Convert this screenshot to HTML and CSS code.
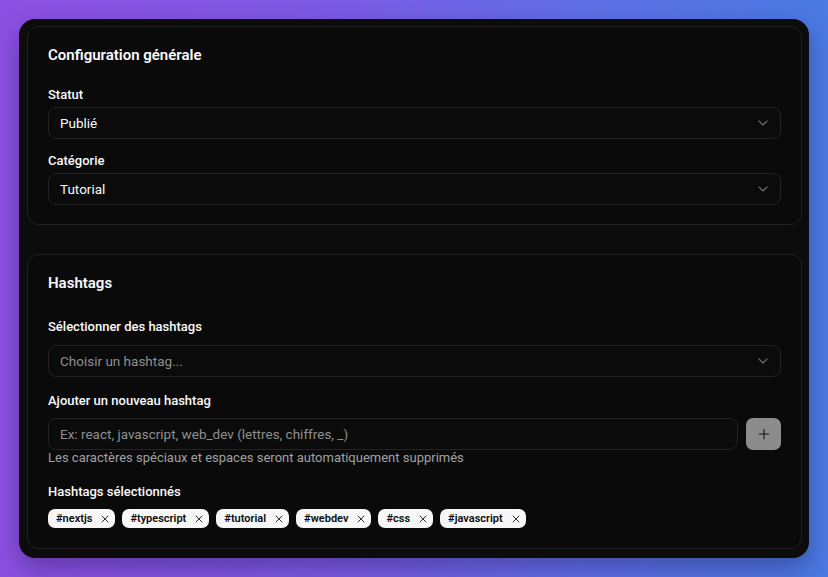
FILE: index.html
```html
<!DOCTYPE html>
<html lang="fr">
<head>
<meta charset="utf-8">
<title>Configuration</title>
<link rel="stylesheet" href="styles.css">
</head>
<body>
<div class="panel">
  <section class="card card-general">
    <h2 class="card-title">Configuration générale</h2>
    <div class="field">
      <label class="label">Statut</label>
      <div class="select">
        <span class="select-value">Publié</span>
        <svg class="chevron" viewBox="0 0 24 24" width="16" height="16"><path d="m6 9 6 6 6-6"/></svg>
      </div>
    </div>
    <div class="field field-second">
      <label class="label">Catégorie</label>
      <div class="select">
        <span class="select-value">Tutorial</span>
        <svg class="chevron" viewBox="0 0 24 24" width="16" height="16"><path d="m6 9 6 6 6-6"/></svg>
      </div>
    </div>
  </section>

  <section class="card card-hashtags">
    <h2 class="card-title">Hashtags</h2>
    <div class="field field-select-tags">
      <label class="label label-lg">Sélectionner des hashtags</label>
      <div class="select">
        <span class="select-value placeholder">Choisir un hashtag...</span>
        <svg class="chevron" viewBox="0 0 24 24" width="16" height="16"><path d="m6 9 6 6 6-6"/></svg>
      </div>
    </div>
    <div class="field field-add">
      <label class="label label-add">Ajouter un nouveau hashtag</label>
      <div class="add-row">
        <div class="input"><span class="placeholder">Ex: react, javascript, web_dev (lettres, chiffres, _)</span></div>
        <button class="add-btn" type="button">
          <svg viewBox="0 0 24 24" width="16" height="16"><path d="M5 12h14M12 5v14"/></svg>
        </button>
      </div>
      <p class="helper">Les caractères spéciaux et espaces seront automatiquement supprimés</p>
    </div>
    <div class="field field-selected">
      <label class="label label-sel">Hashtags sélectionnés</label>
      <div class="tags">
        <span class="tag">#nextjs<svg class="x" viewBox="0 0 24 24"><path d="M18 6 6 18M6 6l12 12"/></svg></span>
        <span class="tag">#typescript<svg class="x" viewBox="0 0 24 24"><path d="M18 6 6 18M6 6l12 12"/></svg></span>
        <span class="tag">#tutorial<svg class="x" viewBox="0 0 24 24"><path d="M18 6 6 18M6 6l12 12"/></svg></span>
        <span class="tag">#webdev<svg class="x" viewBox="0 0 24 24"><path d="M18 6 6 18M6 6l12 12"/></svg></span>
        <span class="tag">#css<svg class="x" viewBox="0 0 24 24"><path d="M18 6 6 18M6 6l12 12"/></svg></span>
        <span class="tag">#javascript<svg class="x" viewBox="0 0 24 24"><path d="M18 6 6 18M6 6l12 12"/></svg></span>
      </div>
    </div>
  </section>
</div>
</body>
</html>
```

FILE: styles.css
```css
* { box-sizing: border-box; }

html, body {
  margin: 0;
  height: 577px;
  overflow: hidden;
}

body {
  padding: 19px;
  background: linear-gradient(to right, #8c50e1 0%, #7c5ae4 40%, #606fe6 70%, #4a7ae2 100%);
  font-family: Roboto, Inter, "Noto Sans", "Liberation Sans", sans-serif;
  color: #fafafa;
}

.panel {
  width: 790px;
  height: 539px;
  background: #0c0c0c;
  border-radius: 16px;
  padding: 7px 7px 7px 8px;
  display: flex;
  flex-direction: column;
  gap: 29px;
  box-shadow: 0 10px 24px rgba(20, 10, 60, 0.35);
  overflow: hidden;
}

.card {
  background: #0a0a0a;
  border: 1px solid #222222;
  border-radius: 12px;
  padding: 18px 20px 20px;
  flex-shrink: 0;
}

.card-general { padding-bottom: 19px; }

.card-title {
  margin: 0;
  font-size: 15px;
  line-height: 20px;
  font-weight: 600;
}

.field { display: flex; flex-direction: column; }

.card-general .field { margin-top: 20px; }
.card-general .field-second { margin-top: 12px; }

.label {
  font-size: 13px;
  line-height: 20px;
  font-weight: 500;
  margin-bottom: 2px;
}

.select, .input {
  height: 32px;
  border: 1px solid #232323;
  border-radius: 8px;
  background: #0b0b0b;
  display: flex;
  align-items: center;
  padding: 0 9px 0 11px;
  font-size: 13.5px;
}

.select-value { flex: 1; }

.placeholder { color: #8f8f8f; }

.chevron {
  fill: none;
  stroke: #6f6f6f;
  stroke-width: 1.6;
  stroke-linecap: round;
  stroke-linejoin: round;
}

.field-select-tags { margin-top: 24px; }
.field-select-tags .label { margin-bottom: 8px; }

.field-add { margin-top: 14px; }
.field-add .label { margin-bottom: 7px; }

.add-row { display: flex; gap: 8px; }
.input { flex: 1; }

.add-btn {
  width: 35px;
  height: 32px;
  border: none;
  border-radius: 7px;
  background: #8c8c8c;
  display: flex;
  align-items: center;
  justify-content: center;
  padding: 0;
}
.add-btn svg {
  fill: none;
  stroke: #141414;
  stroke-width: 1.6;
  stroke-linecap: round;
}

.helper {
  margin: 0;
  font-size: 13px;
  line-height: 15px;
  color: #a1a1a1;
}

.field-selected { margin-top: 17px; }
.field-selected .label { margin-bottom: 7px; }

.tags { display: flex; gap: 7px; }

.tag {
  height: 19px;
  display: inline-flex;
  align-items: center;
  gap: 7px;
  padding: 0 4px 0 8px;
  background: #f7f7f7;
  color: #0a0a0a;
  border-radius: 7px;
  font-size: 11px;
  font-weight: 600;
}

.x {
  width: 12px;
  height: 12px;
  fill: none;
  stroke: #2e2e2e;
  stroke-width: 2;
  stroke-linecap: round;
}
```
